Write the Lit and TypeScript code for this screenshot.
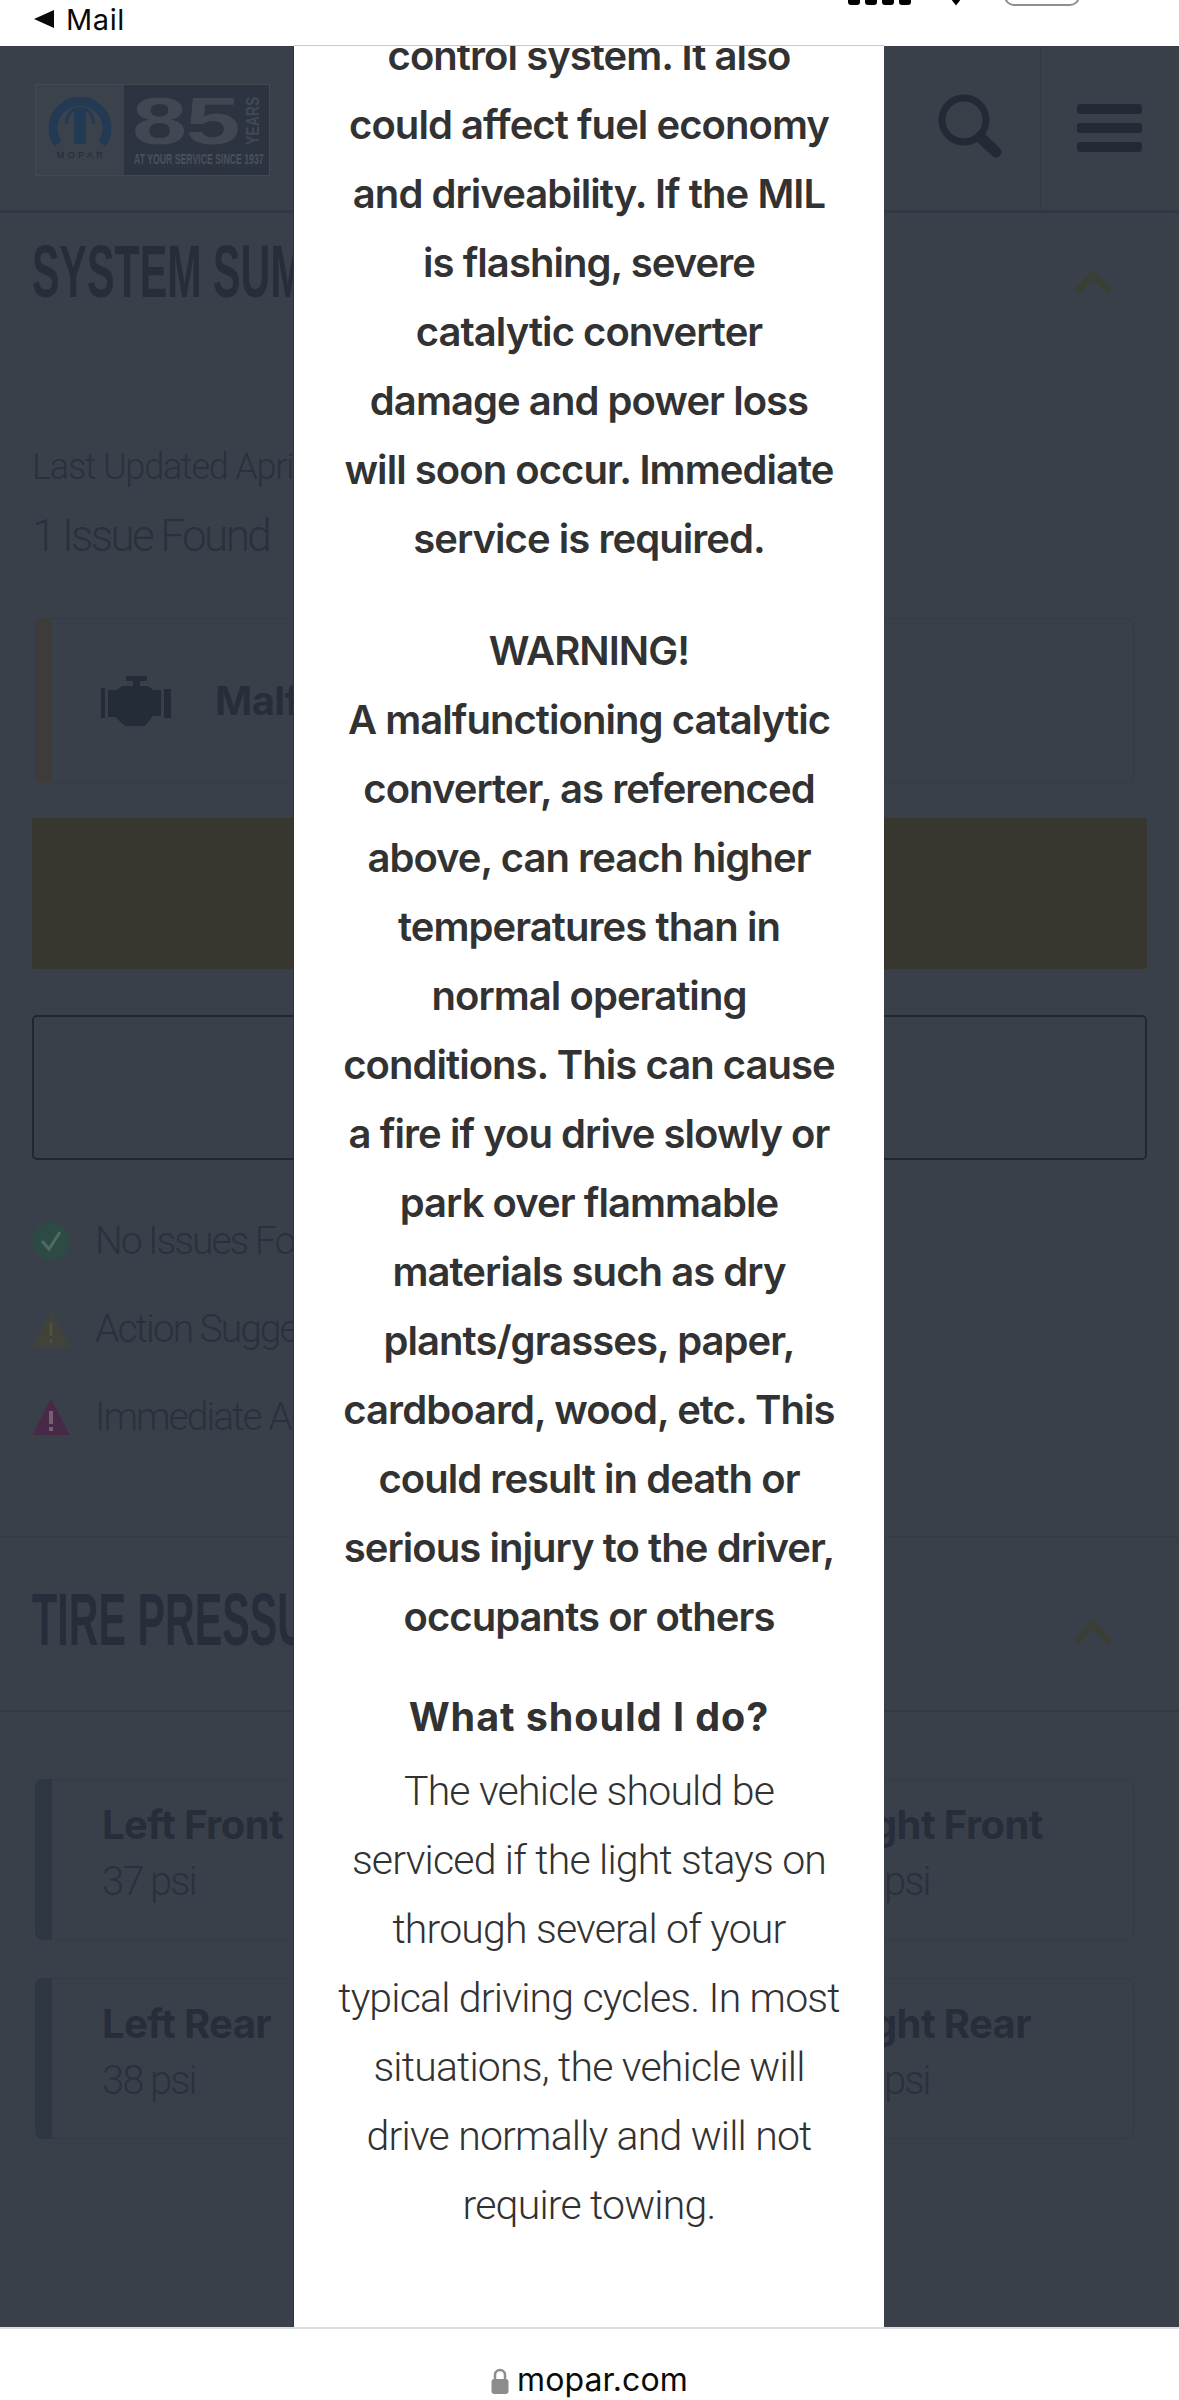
import { LitElement, html, css } from "lit";
import { customElement } from "lit/decorators.js";

const P1 = ["control system. It also","could affect fuel economy","and driveability. If the MIL","is flashing, severe","catalytic converter","damage and power loss","will soon occur. Immediate","service is required."];
const P2 = ["WARNING!","A malfunctioning catalytic","converter, as referenced","above, can reach higher","temperatures than in","normal operating","conditions. This can cause","a fire if you drive slowly or","park over flammable","materials such as dry","plants/grasses, paper,","cardboard, wood, etc. This","could result in death or","serious injury to the driver,","occupants or others"];
const P3 = ["The vehicle should be","serviced if the light stays on","through several of your","typical driving cycles. In most","situations, the vehicle will","drive normally and will not","require towing."];

const chevron = html`<svg class="chev" viewBox="0 0 42 26"><path d="M4 23 L21 6 L38 23" fill="none" stroke="#3a3e35" stroke-width="7"/></svg>`;

@customElement("app-root")
export class AppRoot extends LitElement {
  static styles = css`
    :host { display: block; width: 1179px; height: 2400px; font-family: "Inter", "Liberation Sans", sans-serif; overflow: hidden; background: #fff; }
    .page { height: 2400px; display: flex; flex-direction: column; }
    .status { height: 46px; flex: none; background: #fff; position: relative; display: flex; align-items: flex-start; box-sizing: border-box; padding: 3px 0 0 34px; gap: 12px; overflow: hidden; }
    .mail { font: 400 29px/34px "Inter", sans-serif; color: #0a0a0a; letter-spacing: .6px; }
    .tri { width: 20px; height: 18px; margin-top: 7px; flex: none; }
    .status-right { position: absolute; left: 848px; top: 0; width: 240px; height: 8px; }
    main { flex: 1; position: relative; background: #3a404a; color: #272e3a; overflow: hidden; }
    header { height: 164px; display: flex; border-bottom: 3px solid #323843; padding-left: 35px; align-items: flex-start; }
    .logo { margin-top: 38px; width: 235px; height: 92px; display: flex; border: 1px solid #434852; box-sizing: border-box; flex: none; }
    .logo-l { width: 88px; display: flex; flex-direction: column; align-items: center; padding-top: 11px; box-sizing: border-box; background: #3c424c; }
    .logo-l svg { width: 64px; height: 50px; display: block; }
    .mopar { font: 400 9px/12px "Liberation Sans", sans-serif; letter-spacing: 3.4px; margin-right: -3px; color: #232b37; margin-top: 3px; }
    .logo-r { flex: 1; background: #2c3441; position: relative; overflow: hidden; }
    .n85 { position: absolute; left: 8px; top: 3px; font: 700 66px/66px "Liberation Sans", sans-serif; letter-spacing: -1px; color: #414853; transform: scaleX(1.5); transform-origin: left top; }
    .years { position: absolute; left: 121px; top: 60px; font: 700 18px/16px "Liberation Sans", sans-serif; color: #414853; transform: rotate(-90deg) scaleX(.78); transform-origin: left top; white-space: nowrap; }
    .since { position: absolute; left: 10px; top: 67px; font: 700 15px/14px "Liberation Sans", sans-serif; color: #4a515c; white-space: nowrap; transform: scaleX(.58); transform-origin: left top; }
    .spacer { flex: 1; }
    .hbtn { height: 164px; flex: none; display: flex; align-items: flex-start; position: relative; }
    .search { width: 112px; border-right: 1px solid #333944; }
    .search svg { width: 70px; height: 76px; margin: 41px 0 0 5px; }
    .menu { width: 138px; box-sizing: border-box; padding: 58px 0 0 36px; flex-direction: column; gap: 9px; }
    .menu i { display: block; width: 65px; height: 10px; border-radius: 3px; background: #222a36; }
    .sec-head { display: flex; align-items: center; justify-content: space-between; padding: 0 65px 0 32px; box-sizing: border-box; }
    h2 { margin: 0; font: 700 75px/80px "Liberation Sans", sans-serif; color: #272e3b; white-space: nowrap; transform: scaleX(.55); transform-origin: left center; }
    .chev { width: 42px; height: 30px; flex: none; }
    .head1 .chev { margin-top: 22px; }
    .head2 .chev { margin-top: 38px; }
    .head1 { height: 116px; }
    .head2 { border-bottom: 2px solid #343a45; border-top: 1px solid #353b46; box-sizing: content-box; align-items: flex-start; padding-top: 42px; height: 131px; }
    .body { padding: 0 32px 99px; }
    .updated { margin-top: 113px; font: 300 36px/50px "Roboto", sans-serif; letter-spacing: -1.2px; color: #2a313d; white-space: nowrap; }
    .issue { margin-top: 14px; font: 300 44px/60px "Roboto", sans-serif; letter-spacing: -2.6px; color: #2a313d; }
    .card { margin: 52px 13px 0 3px; height: 165px; border: 1px solid #353b46; border-left: 0; border-radius: 8px; display: flex; align-items: center; box-sizing: border-box; position: relative; }
    .bar { width: 17px; align-self: stretch; flex: none; background: #3d3c3b; border-radius: 6px 0 0 6px; margin: -1px 0; }
    .engine { width: 70px; height: 50px; margin: 0 44px 0 49px; flex: none; }
    .mal { font: 700 40px/50px "Inter", sans-serif; letter-spacing: -.6px; color: #272e3a; white-space: nowrap; }
    .yellow { margin-top: 35px; height: 151px; background: #38372f; border-radius: 3px; }
    .outline { margin-top: 46px; height: 145px; border: 2px solid #1f2733; border-radius: 5px; box-sizing: border-box; }
    .legend { margin-top: 61px; display: flex; flex-direction: column; gap: 48px; }
    .legend div { height: 40px; display: flex; align-items: center; gap: 25px; font: 300 39px/40px "Roboto", sans-serif; letter-spacing: -2px; color: #2a313d; white-space: nowrap; }
    .legend svg { width: 38px; height: 38px; flex: none; }
    .tires { margin: 67px 45px 0 35px; display: grid; grid-template-columns: 365px 1fr 365px; row-gap: 38px; }
    .tcard { height: 161px; border: 1px solid #353b46; border-left: 0; border-radius: 8px; box-sizing: border-box; display: flex; }
    .tbar { width: 17px; flex: none; margin: -1px 0; background: #2e3844; border-radius: 8px 0 0 8px; }
    .right { grid-column: 3; }
    .right .tbar { background: transparent; }
    .tinfo { padding: 16px 0 0 50px; }
    .tname { font: 700 40px/58px "Inter", sans-serif; letter-spacing: -.6px; color: #272e3a; white-space: nowrap; }
    .tval { margin-top: 3px; font: 300 40px/50px "Roboto", sans-serif; letter-spacing: -2px; color: #2a313d; white-space: nowrap; }
    .modal { position: absolute; left: 294px; top: 0; width: 590px; height: 2281px; background: #fff; overflow: hidden; text-align: center; color: #323232; box-shadow: -1px 0 0 #2f353f; }
    .rule { position: absolute; left: 294px; width: 590px; top: 45px; height: 1px; background: #c9c9c9; }
    .scroll { margin-top: -25px; }
    .b { font: 600 40px/69px "Inter", sans-serif; letter-spacing: -.95px; white-space: nowrap; }
    .p2 { margin-top: 43px; }
    .q { margin-top: 36px; font: 700 39.5px/60px "Inter", sans-serif; letter-spacing: .95px; }
    .l { margin-top: 10px; font: 300 41px/69px "Roboto", sans-serif; letter-spacing: -.8px; white-space: nowrap; }
    footer { height: 73px; flex: none; background: #fff; border-top: 2px solid #dedede; box-sizing: border-box; display: flex; justify-content: center; gap: 8px; padding: 32px 0 0 0; }
    footer svg { width: 18px; height: 26px; margin-top: 7px; flex: none; }
    footer span { font: 400 32px/38px "Inter", sans-serif; color: #0a0a0a; letter-spacing: .1px; }
  `;

  render() {
    return html`<div class="page">
      <div class="status">
        <svg class="tri" viewBox="0 0 20 18"><path d="M0 9 L20 0 V18 Z" fill="#0a0a0a"/></svg>
        <span class="mail">Mail</span>
        <svg class="status-right" viewBox="0 0 240 8">
          <rect x="0" y="-8" width="12" height="13" rx="3" fill="#000"/><rect x="17" y="-8" width="12" height="13" rx="3" fill="#000"/><rect x="34" y="-8" width="12" height="13" rx="3" fill="#000"/><rect x="51" y="-8" width="12" height="13" rx="3" fill="#000"/>
          <path d="M99 -6 H117 L108 5.5 Z" fill="#000"/>
          <rect x="157" y="-30" width="74" height="35" rx="9" fill="none" stroke="#8f8f8f" stroke-width="2"/>
        </svg>
      </div>
      <main>
        <header>
          <div class="logo">
            <div class="logo-l">
              <svg viewBox="0 0 64 50"><path d="M10 48 A27 27 0 1 1 54 48" fill="none" stroke="#233a55" stroke-width="9"/><rect x="26" y="11" width="12" height="37" fill="#233a55"/><path d="M18 28 Q19 16 27 13 M46 28 Q45 16 37 13" fill="none" stroke="#233a55" stroke-width="3"/></svg>
              <div class="mopar">MOPAR</div>
            </div>
            <div class="logo-r">
              <span class="n85">85</span>
              <span class="years">YEARS</span>
              <span class="since">AT YOUR SERVICE SINCE 1937</span>
            </div>
          </div>
          <div class="spacer"></div>
          <div class="hbtn search"><svg viewBox="0 0 70 76"><circle cx="31" cy="33" r="22" fill="none" stroke="#222a36" stroke-width="7"/><path d="M47 50 L63 65" stroke="#222a36" stroke-width="11" stroke-linecap="round"/></svg></div>
          <div class="hbtn menu"><i></i><i></i><i></i></div>
        </header>
        <div class="sec-head head1"><h2>SYSTEM SUMMARY</h2>${chevron}</div>
        <div class="body">
          <div class="updated">Last Updated April 2021</div>
          <div class="issue">1 Issue Found</div>
          <div class="card">
            <div class="bar"></div>
            <svg class="engine" viewBox="0 0 70 50"><path d="M25 0 H46 V5 H39 V10 H47 L52 14 H60 V40 H52 L44 50 H24 L14 41 H7 V14 H16 L21 10 H32 V5 H25 Z M0 12 H4 V42 H0 Z M63 13 H70 V42 H63 Z" fill="#242c38"/></svg>
            <div class="mal">Malfunction Indicator Light</div>
          </div>
          <div class="yellow"></div>
          <div class="outline"></div>
          <div class="legend">
            <div><svg viewBox="0 0 38 38"><circle cx="19" cy="19" r="19" fill="#2e4a44"/><path d="M10 19 L17 27 L28 10" fill="none" stroke="#4f6c62" stroke-width="3"/></svg>No Issues Found</div>
            <div><svg viewBox="0 0 38 38"><path d="M19 1 L38 37 H0 Z" fill="#41433a"/><rect x="17.5" y="13" width="3" height="13" fill="#4f4f42"/><rect x="17.5" y="29" width="3" height="4" fill="#4f4f42"/></svg>Action Suggested</div>
            <div><svg viewBox="0 0 38 38"><path d="M19 1 L38 37 H0 Z" fill="#472a47"/><rect x="17" y="13" width="4" height="13" fill="#75606e"/><rect x="17" y="29" width="4" height="4" fill="#75606e"/></svg>Immediate Action Required</div>
          </div>
        </div>
        <div class="sec-head head2"><h2>TIRE PRESSURE</h2>${chevron}</div>
        <div class="tires">
          <div class="tcard"><div class="tbar"></div><div class="tinfo"><div class="tname">Left Front</div><div class="tval">37 psi</div></div></div>
          <div class="tcard right"><div class="tbar"></div><div class="tinfo"><div class="tname">Right Front</div><div class="tval">37 psi</div></div></div>
          <div class="tcard"><div class="tbar"></div><div class="tinfo"><div class="tname">Left Rear</div><div class="tval">38 psi</div></div></div>
          <div class="tcard right"><div class="tbar"></div><div class="tinfo"><div class="tname">Right Rear</div><div class="tval">38 psi</div></div></div>
        </div>
        <div class="modal">
          <div class="scroll">
            <div>${P1.map((t) => html`<div class="b">${t}</div>`)}</div>
            <div class="p2">${P2.map((t) => html`<div class="b">${t}</div>`)}</div>
            <div class="q">What should I do?</div>
            <div class="l">${P3.map((t) => html`<div>${t}</div>`)}</div>
          </div>
        </div>
      </main>
      <footer>
        <svg viewBox="0 0 18 26"><path d="M4 12 V7 A5 5 0 0 1 14 7 V12" fill="none" stroke="#8c8c8c" stroke-width="2.5"/><rect x="0.5" y="11" width="17" height="15" rx="3" fill="#8c8c8c"/></svg>
        <span>mopar.com</span>
      </footer>
      <div class="rule"></div>
    </div>`;
  }
}
